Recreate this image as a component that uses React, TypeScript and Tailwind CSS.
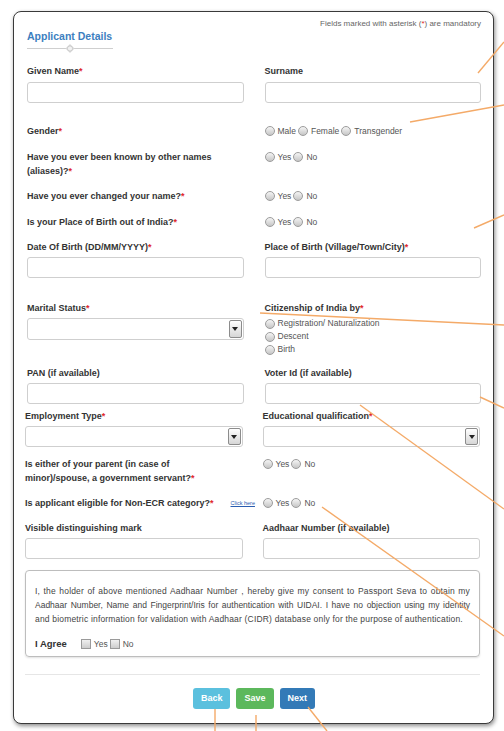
import React from 'react';

const FONT = { fontFamily: '"Liberation Sans", Arial, sans-serif' };

const Req = () => <span className="text-[#e0262b]">*</span>;

const Label = ({ children, req, w = '' }: { children: React.ReactNode; req?: boolean; w?: string }) => (
  <div className={`text-[9px] font-bold text-[#333] leading-[14px] ${w}`}>
    {children}
    {req && <Req />}
  </div>
);

const TextBox = ({ h = 'h-[21px]' }: { h?: string }) => (
  <div className={`${h} border border-[#cfcfcf] rounded-[3px] bg-white`} />
);

const SelectBox = ({ h = 'h-[21px]' }: { h?: string }) => (
  <div className={`${h} border border-[#cfcfcf] rounded-[3px] bg-white flex justify-end p-[1px]`}>
    <div className="w-[13px] border border-[#8c8c8c] rounded-[2px] bg-linear-to-b from-white to-[#d6d6d6] flex items-center justify-center">
      <svg width="6" height="4" viewBox="0 0 6 4">
        <path d="M0 0h6L3 4z" fill="#222" />
      </svg>
    </div>
  </div>
);

const Radio = () => (
  <span className="inline-block w-[10px] h-[10px] rounded-full border border-[#9c9c9c] bg-linear-to-b from-[#f5f5f5] to-[#c6c6c6] shrink-0" />
);

const Check = () => (
  <span className="inline-block w-[10px] h-[10px] border border-[#9a9a9a] bg-linear-to-b from-[#f0f0f0] to-[#cdcdcd] shrink-0" />
);

const Radios = ({ options }: { options: string[] }) => (
  <div className="flex items-center h-[14px] text-[8.5px] text-[#555]">
    {options.map((o, i) => (
      <span key={o} className={`flex items-center gap-[3px] ${i > 0 ? 'ml-[2px]' : ''}`}>
        <Radio />
        {o}
      </span>
    ))}
  </div>
);

const Ornament = () => (
  <svg width="86" height="9" viewBox="0 0 86 9">
    <line x1="0" y1="4.5" x2="86" y2="4.5" stroke="#cfcfcf" strokeWidth="1" />
    <path d="M43 0 L47.5 4.5 L43 9 L38.5 4.5 Z" fill="#d9d9d9" />
    <circle cx="43" cy="4.5" r="2.6" fill="#f2f2f2" stroke="#c4c4c4" strokeWidth="0.8" />
  </svg>
);

const Annotations = () => (
  <svg
    className="absolute inset-0 pointer-events-none"
    width="504"
    height="731"
    viewBox="0 0 504 731"
  >
    <g stroke="#f4aa68" strokeWidth="1.4" fill="none">
      <line x1="478" y1="73" x2="504" y2="42" />
      <line x1="410" y1="122" x2="504" y2="105" />
      <line x1="474" y1="228" x2="504" y2="215" />
      <line x1="260" y1="313" x2="504" y2="325" />
      <line x1="480" y1="397" x2="504" y2="408" />
      <line x1="360" y1="405" x2="504" y2="509" />
      <line x1="322" y1="507" x2="504" y2="636" />
      <line x1="215" y1="709" x2="215" y2="731" />
      <line x1="256" y1="715" x2="256" y2="731" />
      <line x1="308" y1="707" x2="327" y2="731" />
    </g>
  </svg>
);

// consent text, broken as in the screenshot
const consentLines = [
  'I, the holder of above mentioned Aadhaar Number , hereby give my consent to Passport Seva to obtain my',
  'Aadhaar Number, Name and Fingerprint/Iris for authentication with UIDAI. I have no objection using my identity',
  'and biometric information for validation with Aadhaar (CIDR) database only for the purpose of authentication.',
];

export default function App() {
  return (
    <div className="relative w-[504px] h-[731px] overflow-hidden bg-white" style={FONT}>
      <div className="ml-[13px] mt-[11px] w-[481px] border border-[#3a3a3a] rounded-[8px] bg-white shadow-[1px_2px_4px_rgba(0,0,0,0.45)]">
        <div className="pl-[13px] pr-[12px] pt-[6px] pb-[14px]">
          {/* header */}
          <div className="flex justify-end text-[8px] leading-[12px] text-[#666]">
            Fields marked with asterisk (<Req />) are mandatory
          </div>
          <div className="-mt-[1px] text-[10.5px] leading-[14px] font-bold text-[#3d7fc0]">Applicant Details</div>
          <div className="mt-[1px] h-[9px] flex">
            <Ornament />
          </div>

          {/* upper section */}
          <div className="mt-[11px] grid grid-cols-2 gap-x-[21px]">
            <div>
              <Label req>Given Name</Label>
              <div className="mt-[4px]"><TextBox /></div>
            </div>
            <div>
              <Label>Surname</Label>
              <div className="mt-[4px]"><TextBox /></div>
            </div>
          </div>

          <div className="mt-[21px] grid grid-cols-2 gap-x-[21px]">
            <Label req>Gender</Label>
            <Radios options={['Male', 'Female', 'Transgender']} />
          </div>

          <div className="mt-[12px] grid grid-cols-2 gap-x-[21px]">
            <Label req>Have you ever been known by other names (aliases)?</Label>
            <Radios options={['Yes', 'No']} />
          </div>

          <div className="mt-[11px] grid grid-cols-2 gap-x-[21px]">
            <Label req>Have you ever changed your name?</Label>
            <Radios options={['Yes', 'No']} />
          </div>

          <div className="mt-[12px] grid grid-cols-2 gap-x-[21px]">
            <Label req>Is your Place of Birth out of India?</Label>
            <Radios options={['Yes', 'No']} />
          </div>

          <div className="mt-[11px] grid grid-cols-2 gap-x-[21px]">
            <div>
              <Label req>Date Of Birth (DD/MM/YYYY)</Label>
              <div className="mt-[3px]"><TextBox /></div>
            </div>
            <div>
              <Label req>Place of Birth (Village/Town/City)</Label>
              <div className="mt-[3px]"><TextBox /></div>
            </div>
          </div>

          <div className="mt-[23px] grid grid-cols-2 gap-x-[21px]">
            <div>
              <Label req>Marital Status</Label>
              <div className="mt-[3px]"><SelectBox h="h-[22px]" /></div>
            </div>
            <div>
              <Label req>Citizenship of India by</Label>
              <div className="mt-[2px] flex flex-col text-[8.5px] text-[#555]">
                {['Registration/ Naturalization', 'Descent', 'Birth'].map((o) => (
                  <span key={o} className="flex items-center gap-[3px] h-[13px]">
                    <Radio />
                    {o}
                  </span>
                ))}
              </div>
            </div>
          </div>

          <div className="mt-[10px] grid grid-cols-2 gap-x-[21px]">
            <div>
              <Label>PAN (if available)</Label>
              <div className="mt-[3px]"><TextBox /></div>
            </div>
            <div>
              <Label>Voter Id (if available)</Label>
              <div className="mt-[3px]"><TextBox /></div>
            </div>
          </div>

          {/* lower section */}
          <div className="-ml-[2px] mr-[1px]">
            <div className="mt-[5px] grid grid-cols-2 gap-x-[20px]">
              <div>
                <Label req>Employment Type</Label>
                <div className="mt-[3px]"><SelectBox /></div>
              </div>
              <div>
                <Label req>Educational qualification</Label>
                <div className="mt-[3px]"><SelectBox /></div>
              </div>
            </div>

            <div className="mt-[10px] grid grid-cols-2 gap-x-[20px]">
              <Label req w="w-[190px]">Is either of your parent (in case of minor)/spouse, a government servant?</Label>
              <Radios options={['Yes', 'No']} />
            </div>

            <div className="mt-[11px] grid grid-cols-2 gap-x-[20px]">
              <Label req>Is applicant eligible for Non-ECR category?</Label>
              <div className="flex items-center">
                <a className="-ml-[32px] mr-[4px] w-[28px] text-[5.5px] leading-[14px] text-[#2a5db0] underline whitespace-nowrap">
                  Click here
                </a>
                <Radios options={['Yes', 'No']} />
              </div>
            </div>

            <div className="mt-[11px] grid grid-cols-2 gap-x-[20px]">
              <div>
                <Label>Visible distinguishing mark</Label>
                <div className="mt-[3px]"><TextBox /></div>
              </div>
              <div>
                <Label>Aadhaar Number (if available)</Label>
                <div className="mt-[3px]"><TextBox /></div>
              </div>
            </div>

            <div className="mt-[11px] h-[87px] border border-[#bdbdbd] rounded-[4px] shadow-[0_1px_2px_rgba(0,0,0,0.12)] px-[9px] pt-[13px]">
              <div className="text-[8.5px] leading-[14px] text-[#444] whitespace-nowrap">
                <div className="text-justify [text-align-last:justify] tracking-[0.15px]">{consentLines[0]}</div>
                <div className="text-justify [text-align-last:justify]">{consentLines[1]}</div>
                <div className="tracking-[0.18px]">{consentLines[2]}</div>
              </div>
              <div className="mt-[11px] flex items-center h-[14px] text-[8.5px] text-[#555]">
                <span className="text-[9.5px] font-bold text-[#333] mr-[14px]">I Agree</span>
                <span className="flex items-center gap-[3px]">
                  <Check />
                  Yes
                </span>
                <span className="flex items-center gap-[3px] ml-[2px]">
                  <Check />
                  No
                </span>
              </div>
            </div>

            <div className="mt-[17px] border-t border-[#e6e6e6]" />
          </div>

          <div className="mt-[13px] flex justify-center gap-[6px]">
            <button className="h-[21px] px-[8px] rounded-[3px] bg-[#5bc0de] text-white text-[9px] font-bold">Back</button>
            <button className="h-[21px] px-[8px] rounded-[3px] bg-[#5cb85c] text-white text-[9px] font-bold">Save</button>
            <button className="h-[21px] px-[8px] rounded-[3px] bg-[#337ab7] text-white text-[9px] font-bold">Next</button>
          </div>
        </div>
      </div>
      <Annotations />
    </div>
  );
}
